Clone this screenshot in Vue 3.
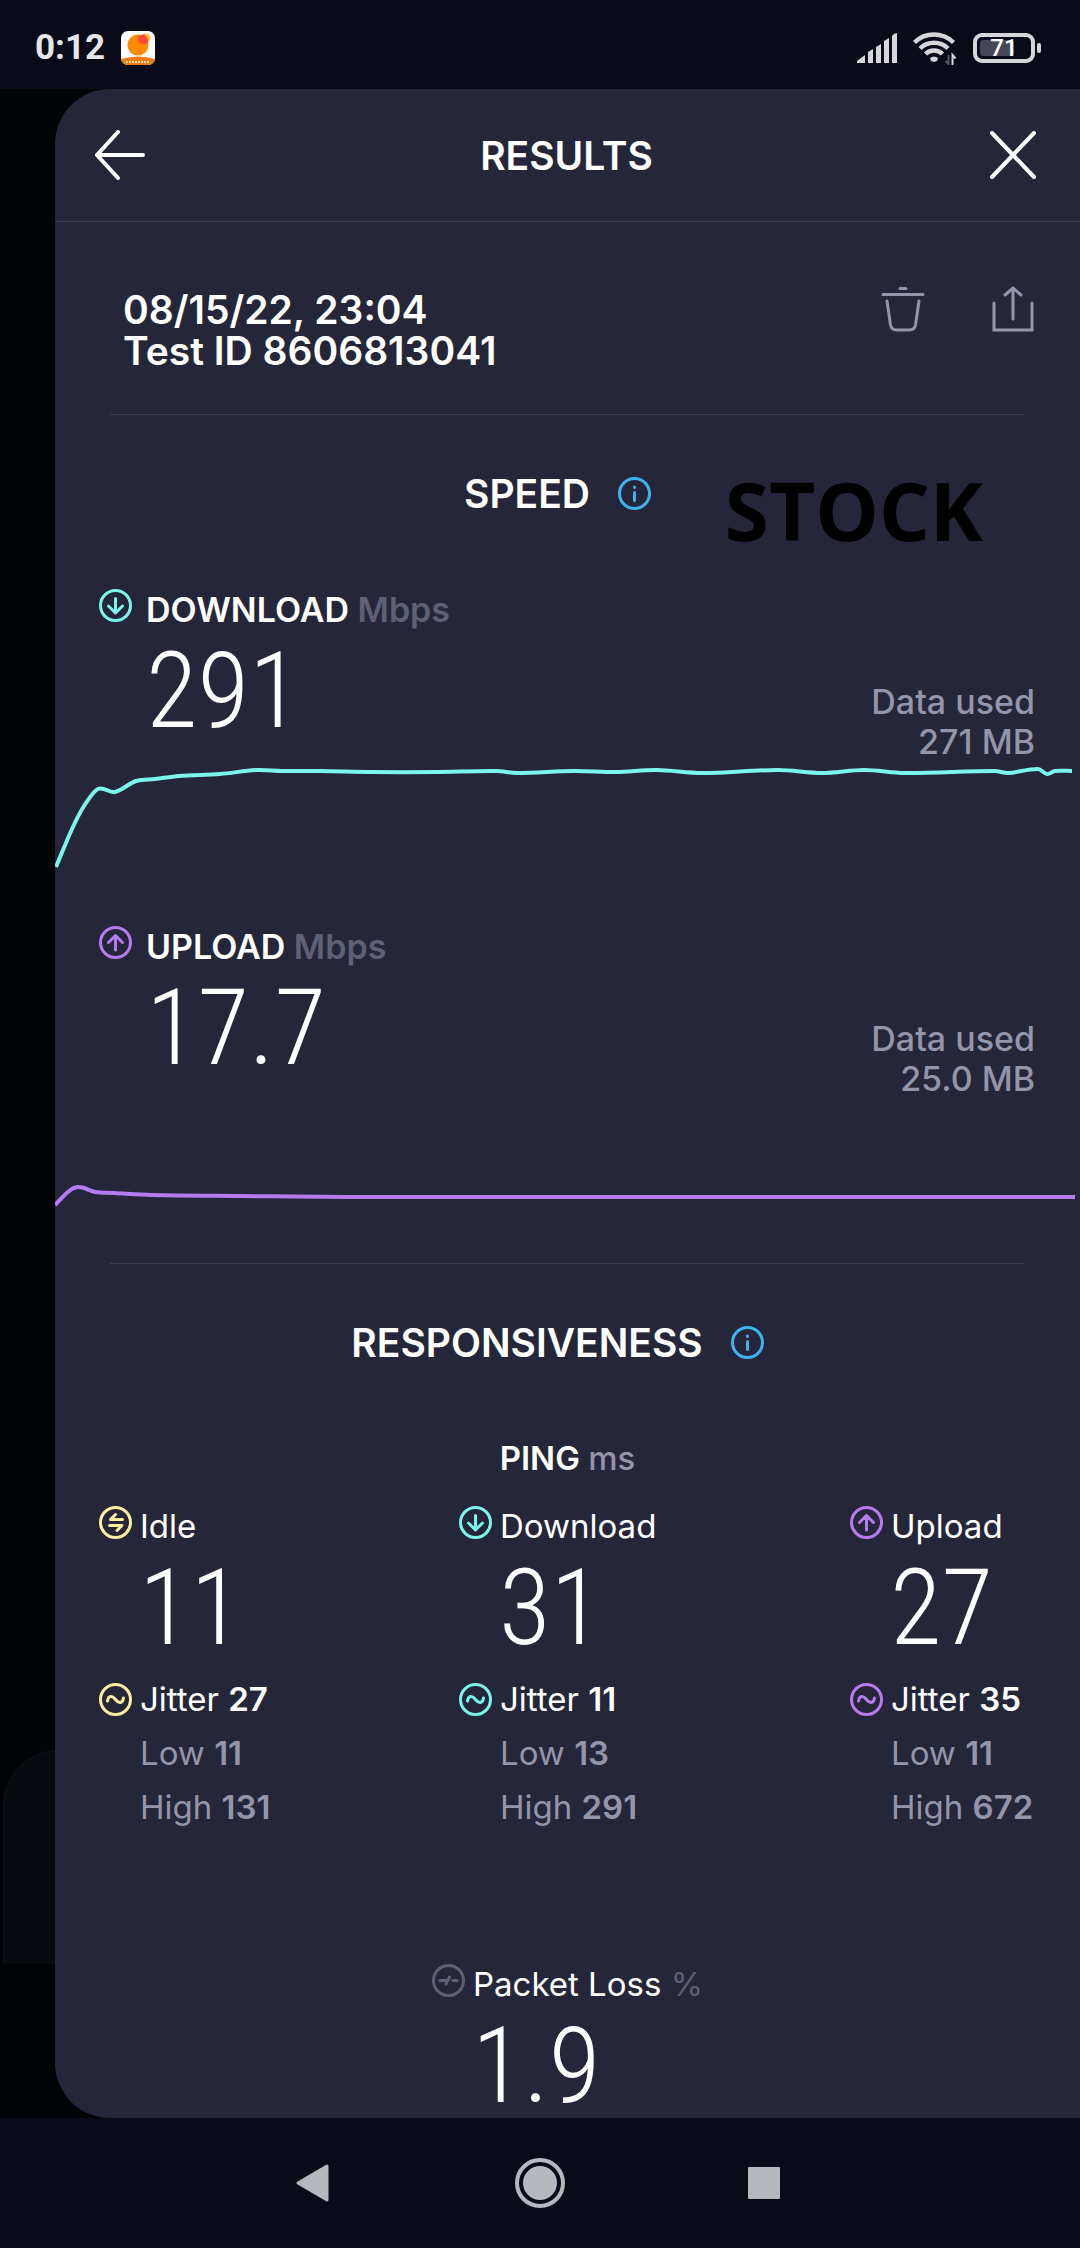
<template>
  <div class="screen">
    <header class="statusBar">
      <span class="clock">0:12</span>
      <svg class="appIcon" viewBox="0 0 34 34">
        <defs>
          <clipPath id="appClip"><rect width="34" height="34" rx="7" /></clipPath>
        </defs>
        <g clip-path="url(#appClip)">
          <rect width="34" height="34" fill="#fff" />
          <circle cx="25" cy="7" r="4.500" fill="#fcc43c" />
          <circle cx="17" cy="14" r="10.500" fill="#ff8a00" />
          <path d="M17 8a5 5 0 0 1 6-4.500a11 11 0 0 1 4.500 7.500a6 6 0 0 1-10.500-3z" fill="#fb4a3c" />
          <path d="M0 28q17-5 34 0v6h-34z" fill="#ec7c14" />
          <path d="M5 31h24" stroke="#fbd7a8" stroke-width="2" stroke-dasharray="2 1" />
        </g>
      </svg>
      <div class="indicators">
        <svg class="signal" viewBox="0 0 40 30" fill="#d5d5da">
          <path d="M0 30v-2l8-6v8zM11 30v-11l5-3v14zM19 30v-16l5-3v19zM27 30v-22l5-3v25zM35 30v-27q2-3 5-3v30z" />
        </svg>
        <svg class="wifi" viewBox="0 0 44 34" fill="none" stroke="#d5d5da" stroke-width="4.500">
          <path d="M1.500 11.500a28 28 0 0 1 39 0M7 17.500a20 20 0 0 1 28 0M12.500 23a12 12 0 0 1 17 0" />
          <path d="M17 27q4-3 8 0l-1 3-3 1-3-1z" fill="#d5d5da" stroke="none" />
          <path d="M39.500 34v-10l3 3.500" stroke-width="2" />
          <path d="M35.500 24v9l-3-3" stroke="#55565f" stroke-width="2" />
        </svg>
        <div class="battery">
          <span class="level" :style="{ width: battery + '%' }"></span>
          <span class="batteryText">{{ battery }}</span>
        </div>
      </div>
    </header>

    <div class="stage">
      <div class="backCard"></div>
      <main class="panel">
        <div class="titleBar">
          <button class="iconButton" aria-label="Back">
            <svg class="navIcon" viewBox="0 0 50 50"><path d="M2 25h46M23 2L2 25l21 23" /></svg>
          </button>
          <h1>RESULTS</h1>
          <button class="iconButton" aria-label="Close">
            <svg class="navIcon" viewBox="0 0 50 50"><path d="M4 3l42 44M46 3L4 47" /></svg>
          </button>
        </div>

        <section class="meta">
          <div class="metaText">
            <div>08/15/22, 23:04</div>
            <div>Test ID 8606813041</div>
          </div>
          <div class="actions">
            <button class="iconButton" aria-label="Delete">
              <svg class="actionIcon" viewBox="0 3 46 46">
                <path d="M20 2.500h6M3 8.500h40M7 15l3.500 24q1 5 6 5h13q5 0 6-5l3.500-24" />
              </svg>
            </button>
            <button class="iconButton" aria-label="Share">
              <svg class="actionIcon" viewBox="0 3 46 46">
                <path d="M4 17v27h38v-27M23 33v-30M15 9l8-7 8 7" />
              </svg>
            </button>
          </div>
        </section>
        <hr />

        <section class="speed">
          <div class="heading">
            <h2>SPEED</h2>
            <button class="iconButton" aria-label="About speed">
              <svg class="badge info" viewBox="0 0 33 33">
                <circle cx="16.500" cy="16.500" r="15" />
                <path d="M16.500 15.500v8M16.500 10v.500" />
              </svg>
            </button>
          </div>
          <span class="stamp">STOCK</span>

          <article v-for="s in speeds" :key="s.name" class="metric" :class="s.color">
            <div class="metricLabel">
              <svg class="badge" viewBox="0 0 33 33">
                <circle cx="16.500" cy="16.500" r="15" />
                <path :d="icons[s.icon]" />
              </svg>
              <span class="name">{{ s.name }} <span class="unit">Mbps</span></span>
            </div>
            <div class="metricRow">
              <div class="number">{{ s.value }}</div>
              <div class="dataUsed">
                <div>Data used</div>
                <div>{{ s.data }}</div>
              </div>
            </div>
            <svg class="chart" viewBox="0 0 1025 110" preserveAspectRatio="none">
              <path :d="linePath(s.points)" />
            </svg>
          </article>
        </section>
        <hr />

        <section class="responsiveness">
          <div class="heading">
            <h2>RESPONSIVENESS</h2>
            <button class="iconButton" aria-label="About responsiveness">
              <svg class="badge info" viewBox="0 0 33 33">
                <circle cx="16.500" cy="16.500" r="15" />
                <path d="M16.500 15.500v8M16.500 10v.500" />
              </svg>
            </button>
          </div>
          <h3>PING <span>ms</span></h3>

          <div class="pings">
            <article v-for="p in pings" :key="p.name" :class="p.color">
              <div class="pingLabel">
                <svg class="badge" viewBox="0 0 33 33">
                  <circle cx="16.500" cy="16.500" r="15" />
                  <path :d="icons[p.icon]" />
                </svg>
                <span>{{ p.name }}</span>
              </div>
              <div class="number">{{ p.value }}</div>
              <div class="detail jitter">
                <svg class="badge" viewBox="0 0 33 33">
                  <circle cx="16.500" cy="16.500" r="15" />
                  <path :d="icons.wave" />
                </svg>
                <span>Jitter <b>{{ p.jitter }}</b></span>
              </div>
              <div class="detail muted">Low <b>{{ p.low }}</b></div>
              <div class="detail muted">High <b>{{ p.high }}</b></div>
            </article>
          </div>

          <article class="packetLoss">
            <div class="pingLabel">
              <svg class="badge gray" viewBox="0 0 33 33">
                <circle cx="16.500" cy="16.500" r="15" />
                <path :d="icons.loss" />
              </svg>
              <span>Packet Loss <span class="unit">%</span></span>
            </div>
            <div class="number">1.9</div>
          </article>
        </section>
      </main>
    </div>

    <nav class="systemNav">
      <button class="iconButton" aria-label="System back">
        <svg class="sysIcon" viewBox="0 0 50 50">
          <path d="M8 25L37 8v34z" stroke="#b7b8bd" stroke-width="3" stroke-linejoin="round" />
        </svg>
      </button>
      <button class="iconButton" aria-label="Home">
        <svg class="sysIcon" viewBox="0 0 50 50">
          <circle cx="25" cy="25" r="23" fill="none" stroke="#b7b8bd" stroke-width="4" />
          <circle cx="25" cy="25" r="17" />
        </svg>
      </button>
      <button class="iconButton" aria-label="Recent apps">
        <svg class="sysIcon" viewBox="0 0 50 50"><rect x="8" y="9" width="32" height="32" rx="1" /></svg>
      </button>
    </nav>
  </div>
</template>

<script setup>
import { ref } from "vue";

const battery = ref(71)

const icons = {
  down: "M16.500 9.500v14M9.500 17l7 7 7-7",
  up: "M16.500 24v-14M9.500 16.500l7-7 7 7",
  idle: "M23.500 13.500h-12l5-5M10.500 19.500h12.500l-5 5",
  wave: "M8.500 18c1-6 5-5.500 8-1.500s7 4.500 8-1.500",
  loss: "M8 16.500h7M14 20l3.500-7M21 16.500h4",
}

const speeds = [
  {
    name: "DOWNLOAD",
    icon: "down",
    color: "teal",
    value: "291",
    data: "271 MB",
    points: [
      [1, 105], [17, 67], [29, 44], [43, 27], [60, 30], [81, 19], [100, 17], [124, 14], [165, 12],
      [202, 8], [227, 9], [265, 9], [317, 10], [380, 10], [441, 9], [462, 11], [519, 9], [561, 10],
      [602, 8], [647, 11], [723, 8], [767, 11], [809, 8], [850, 11], [940, 9], [953, 11], [983, 7],
      [992, 12], [1000, 9], [1017, 9],
    ],
  },
  {
    name: "UPLOAD",
    icon: "up",
    color: "purple",
    value: "17.7",
    data: "25.0 MB",
    points: [
      [0, 106], [14, 92], [22, 88], [29, 89], [40, 93], [59, 94], [97, 96], [186, 97], [290, 98],
      [600, 98], [700, 98], [1020, 98],
    ],
  },
]

const pings = [
  { name: "Idle", icon: "idle", color: "yellow", value: 11, jitter: 27, low: 11, high: 131 },
  { name: "Download", icon: "down", color: "teal", value: 31, jitter: 11, low: 13, high: 291 },
  { name: "Upload", icon: "up", color: "purple", value: 27, jitter: 35, low: 11, high: 672 },
]

// smooth curve that passes through every sample
function linePath(points) {
  let d = `M${points[0]}`
  for (let i = 0; i < points.length - 1; i++) {
    const a = points[i - 1] || points[i]
    const b = points[i]
    const c = points[i + 1]
    const e = points[i + 2] || c
    // keep the handles inside the segment, the samples are not evenly spaced
    const w = (c[0] - b[0]) / 3
    const s1 = (c[1] - a[1]) / (c[0] - a[0])
    const s2 = (e[1] - b[1]) / (e[0] - b[0])
    d += `C${b[0] + w} ${b[1] + w * s1} ${c[0] - w} ${c[1] - w * s2} ${c[0]} ${c[1]}`
  }
  return d
}
</script>

<style>
body {
  margin: 0;
  background: #090b19;
}
</style>

<style scoped>
.screen {
  display: flex;
  flex-direction: column;
  min-height: 100vh;
  color: #fff;
  font-family: Inter, "Liberation Sans", sans-serif;
  font-size: 33px;
}

h1, h2, h3 {
  margin: 0;
  font-size: 39px;
  font-weight: 600;
  line-height: 41px;
}

.iconButton {
  display: flex;
  padding: 0;
  border: none;
  background-color: transparent;
}

.statusBar {
  display: flex;
  align-items: center;
  height: 89px;
  box-sizing: border-box;
  padding: 6px 41px 0 35px;
  background: #090b19;
  font-family: Roboto, sans-serif;
}

.clock {
  font-size: 35px;
  font-weight: 700;
  color: #e6e6ea;
}

.appIcon {
  width: 34px;
  height: 34px;
  margin-left: 16px;
}

.indicators {
  display: flex;
  align-items: center;
  gap: 16px;
  margin-left: auto;
}

.signal {
  width: 40px;
  height: 30px;
}

.wifi {
  width: 44px;
  height: 34px;
}

.battery {
  position: relative;
  width: 62px;
  height: 30px;
  box-sizing: border-box;
  padding: 3px;
  border: 4px solid #d5d5da;
  border-radius: 9px;
  margin-right: 4px;
}

.battery::after {
  content: "";
  position: absolute;
  right: -10px;
  top: 6px;
  width: 4px;
  height: 10px;
  border-radius: 2px;
  background: #d5d5da;
}

.level {
  display: block;
  height: 100%;
  border-radius: 3px;
  background: #464754;
}

.batteryText {
  position: absolute;
  inset: 0;
  font-size: 24px;
  font-weight: 500;
  line-height: 23px;
  text-align: center;
}

.stage {
  position: relative;
  display: flex;
  flex: 1;
  padding-left: 55px;
  background: #020307;
}

.backCard {
  position: absolute;
  left: 3px;
  bottom: 154px;
  width: 120px;
  height: 214px;
  box-sizing: border-box;
  border: 2px solid #0d0e14;
  border-bottom: none;
  border-radius: 56px 0 0 0;
  background: #08090f;
}

.panel {
  position: relative;
  flex: 1;
  min-width: 0;
  border-radius: 55px 0 0 55px;
  background: #252639;
}

.titleBar {
  display: flex;
  align-items: center;
  justify-content: space-between;
  height: 133px;
  box-sizing: border-box;
  padding: 0 42px 0 40px;
  border-bottom: 1px solid #3a3b4f;
}

.navIcon {
  width: 50px;
  height: 50px;
  fill: none;
  stroke: #fff;
  stroke-width: 4;
  stroke-linecap: round;
}

.meta {
  display: flex;
  justify-content: space-between;
  align-items: flex-start;
  padding: 67px 44px 43px 68px;
}

.metaText {
  font-size: 39px;
  font-weight: 600;
  line-height: 41px;
}

.actions {
  display: flex;
  gap: 64px;
}

.actionIcon {
  width: 46px;
  height: 46px;
  overflow: visible;
  fill: none;
  stroke: #9495ab;
  stroke-width: 3;
  stroke-linecap: round;
}

hr {
  height: 1px;
  margin: 0 55px;
  border: none;
  background: #3a3b4f;
}

.speed {
  position: relative;
}

.heading {
  display: flex;
  align-items: center;
  justify-content: center;
  gap: 28px;
  padding: 58px 20px 75px 0;
}

.stamp {
  position: absolute;
  top: 45px;
  right: 97px;
  color: #000;
  font-family: "Open Sans", sans-serif;
  font-size: 80px;
  font-weight: 700;
  line-height: 100px;
}

.badge {
  flex: none;
  width: 33px;
  height: 33px;
  fill: none;
  stroke: currentColor;
  stroke-width: 3;
  stroke-linecap: round;
  stroke-linejoin: round;
}

.teal .badge, .teal .chart {
  color: #7af6ed;
}

.purple .badge, .purple .chart {
  color: #b77bf0;
}

.yellow .badge {
  color: #fcefa0;
}

.badge.info {
  color: #3fb3ee;
}

.badge.gray {
  color: #5f6075;
}

.metric {
  padding-bottom: 54px;
}

.metricLabel {
  display: flex;
  gap: 14px;
  padding-left: 44px;
  font-size: 34px;
  font-weight: 600;
  line-height: 41px;
}

.unit {
  color: #5f6075;
}

.metricRow {
  display: flex;
  justify-content: space-between;
  height: 132px;
  padding: 0 45px 0 91px;
}

.number {
  margin-top: 13px;
  font-family: "Roboto Condensed", Roboto, sans-serif;
  font-size: 106px;
  font-weight: 300;
  line-height: 96px;
}

.dataUsed {
  align-self: flex-end;
  color: #9495ab;
  font-size: 34px;
  font-weight: 500;
  line-height: 40px;
  text-align: right;
}

.chart {
  display: block;
  width: 100%;
  height: 110px;
  fill: none;
  stroke: currentColor;
  stroke-width: 4;
}

h3 {
  font-size: 33px;
  text-align: center;
}

h3 span {
  color: #9495ab;
  font-weight: 500;
}

.pings {
  display: grid;
  grid-template-columns: 360fr 391fr 186fr;
  padding: 27px 44px 0;
}

.pingLabel {
  display: flex;
  gap: 8px;
  line-height: 41px;
  white-space: nowrap;
}

.pings .number, .packetLoss .number {
  padding-left: 40px;
}

.detail {
  padding-left: 41px;
  line-height: 54px;
  white-space: nowrap;
}

.detail b {
  font-weight: 600;
}

.jitter {
  display: flex;
  align-items: center;
  gap: 8px;
  margin-top: 16px;
  padding-left: 0;
}

.muted {
  color: #9495ab;
}

.packetLoss {
  width: fit-content;
  margin: 130px auto 0;
}

.systemNav {
  display: flex;
  align-items: center;
  justify-content: center;
  gap: 175px;
  height: 130px;
  background: #090b19;
}

.sysIcon {
  width: 50px;
  height: 50px;
  fill: #b7b8bd;
}
</style>
